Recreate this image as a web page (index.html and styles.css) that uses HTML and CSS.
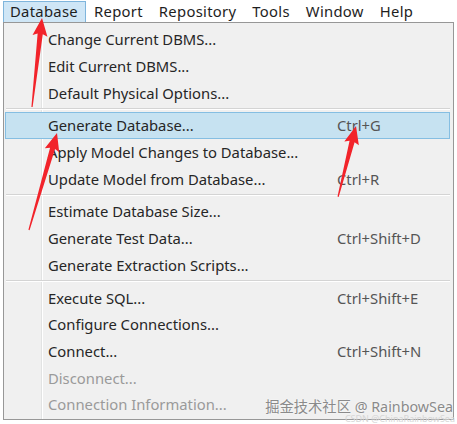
FILE: index.html
```html
<!DOCTYPE html>
<html lang="en">
<head>
  <meta charset="UTF-8">
  <meta name="viewport" content="width=device-width, initial-scale=1.0">
  <title>Database menu</title>
  <link rel="stylesheet" href="styles.css">
</head>
<body>

  <nav class="menubar">
    <span class="menubar-item active">Database</span>
    <span class="menubar-item">Report</span>
    <span class="menubar-item">Repository</span>
    <span class="menubar-item">Tools</span>
    <span class="menubar-item">Window</span>
    <span class="menubar-item">Help</span>
  </nav>

  <div class="dropdown">
    <div class="menu-item"><span>Change Current DBMS...</span><span class="key"></span></div>
    <div class="menu-item"><span>Edit Current DBMS...</span><span class="key"></span></div>
    <div class="menu-item"><span>Default Physical Options...</span><span class="key"></span></div>
    <div class="separator"></div>
    <div class="menu-item selected"><span>Generate Database...</span><span class="key">Ctrl+G</span></div>
    <div class="menu-item"><span>Apply Model Changes to Database...</span><span class="key"></span></div>
    <div class="menu-item"><span>Update Model from Database...</span><span class="key">Ctrl+R</span></div>
    <div class="separator"></div>
    <div class="menu-item"><span>Estimate Database Size...</span><span class="key"></span></div>
    <div class="menu-item"><span>Generate Test Data...</span><span class="key">Ctrl+Shift+D</span></div>
    <div class="menu-item"><span>Generate Extraction Scripts...</span><span class="key"></span></div>
    <div class="separator"></div>
    <div class="menu-item"><span>Execute SQL...</span><span class="key">Ctrl+Shift+E</span></div>
    <div class="menu-item"><span>Configure Connections...</span><span class="key"></span></div>
    <div class="menu-item"><span>Connect...</span><span class="key">Ctrl+Shift+N</span></div>
    <div class="menu-item disabled"><span>Disconnect...</span><span class="key"></span></div>
    <div class="menu-item disabled"><span>Connection Information...</span><span class="key"></span></div>
  </div>

  <!-- red pointers drawn on top of the menu -->
  <svg class="marks" width="457" height="424" viewBox="0 0 457 424">
    <g fill="#f2232a">
      <polygon points="0,0 7.5,18 2.6,16 0.6,89.6 -0.6,89.6 -2.6,16 -7.5,18" transform="translate(42 18) rotate(6.4)"/>
      <polygon points="0,0 7.5,18 2.6,16 0.6,101 -0.6,101 -2.6,16 -7.5,18" transform="translate(57 133) rotate(16.1)"/>
      <polygon points="0,0 7.5,18 2.6,16 0.6,73 -0.6,73 -2.6,16 -7.5,18" transform="translate(356 126) rotate(14.2)"/>
    </g>
  </svg>

  <div class="watermark">
    <span class="wm-main">掘金技术社区 @ RainbowSea</span>
    <span class="wm-sub">CSDN @ChinaRainbowSea</span>
  </div>

</body>
</html>
```

FILE: styles.css
```css
/* Page */
body {
  margin: 0;
  background-color: #ffffff;
  font-family: "Noto Sans", "Open Sans", sans-serif;
  font-size: 14.8px;
  color: #262626;
  position: relative;
  width: 457px;
  height: 424px;
  overflow: hidden;
}

/* Menu bar */
.menubar {
  display: flex;
  height: 22px;
  padding: 1px 0 0 3px;
  box-sizing: border-box;
}

.menubar-item {
  padding: 0 7px 0 6px;
  margin-right: 1px;
  border: 1px solid transparent;
  line-height: 19px;
  letter-spacing: 0.3px;
  color: #1e1e1e;
}

.menubar-item.active {
  background-color: #cfe6f6;
  border-color: #7fb5dc;
  border-bottom: none;
}

/* Dropdown */
.dropdown {
  margin-left: 3px;
  width: 451px;
  height: 398px;
  box-sizing: border-box;
  border: 1px solid #979797;
  background-color: #f0f0f0;
  /* icon gutter line */
  background-image: linear-gradient(to right,
    transparent 37px, #e2e3e3 37px, #e2e3e3 38px,
    #ffffff 38px, #ffffff 39px, transparent 39px);
  padding: 3px 3px 0 1px;
}

.menu-item {
  display: grid;
  grid-template-columns: 289px auto;
  height: 26.7px;
  box-sizing: border-box;
  border: 1px solid transparent;
  padding-left: 42px;
  align-items: center;
  white-space: nowrap;
}

.menu-item .key {
  color: #555555;
}

.menu-item.selected {
  background-color: #c6e2f1;
  border-color: #85bee2;
}

.menu-item.disabled,
.menu-item.disabled .key {
  color: #9a9a9a;
}

.separator {
  height: 6px;
  margin: 0 0 0 1px;
  background-image: linear-gradient(to bottom,
    transparent 2px, #d4d4d4 2px, #d4d4d4 3px,
    #ffffff 3px, #ffffff 4px, transparent 4px);
}

/* Overlays */
.marks {
  position: absolute;
  left: 0;
  top: 0;
  pointer-events: none;
}

.watermark {
  position: absolute;
  right: 4px;
  bottom: 8px;
  text-align: right;
  pointer-events: none;
}

.wm-main {
  display: block;
  font-family: "Noto Sans", "Noto Sans CJK SC", sans-serif;
  font-size: 14.3px;
  line-height: 18px;
  color: #8a8a8a;
  text-shadow: 0 0 2px #ffffff;
}

.wm-sub {
  position: absolute;
  right: -2px;
  top: 14px;
  font-size: 9px;
  color: #d6d6d6;
  white-space: nowrap;
}
```
